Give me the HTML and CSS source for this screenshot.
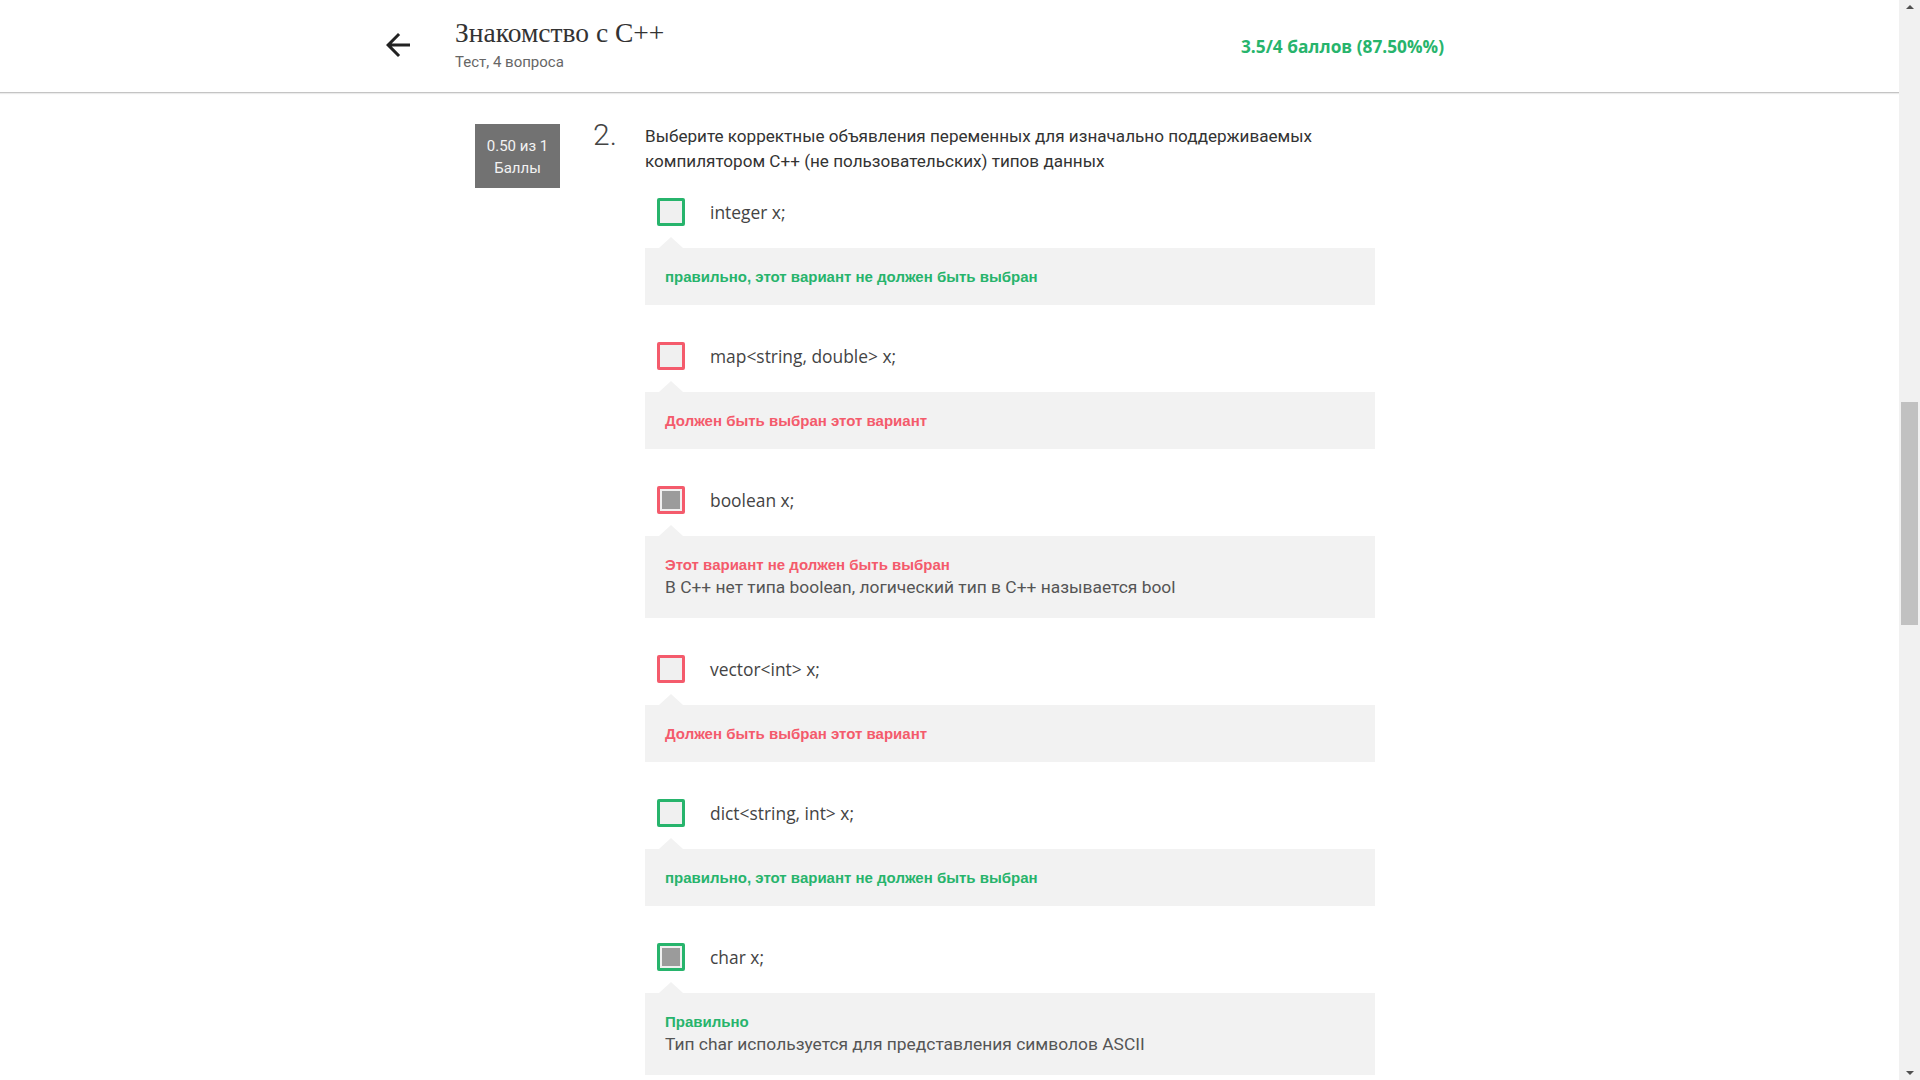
FILE: index.html
```html
<!DOCTYPE html>
<html lang="ru">
<head>
<meta charset="utf-8">
<title>Знакомство с C++</title>
<link rel="stylesheet" href="styles.css">
</head>
<body>
<div class="viewport">
  <div class="main">
    <header class="topbar">
      <div class="topbar-inner">
        <svg class="back" width="36" height="36" viewBox="0 0 24 24"><path d="M20 11H7.83l5.59-5.59L12 4l-8 8 8 8 1.41-1.41L7.83 13H20v-2z" fill="#222"/></svg>
        <div class="titles">
          <div class="title">Знакомство с C++</div>
          <div class="subtitle">Тест, 4 вопроса</div>
        </div>
        <div class="spacer"></div>
        <div class="score">3.5/4 баллов (87.50%%)</div>
      </div>
    </header>
    <section class="content">
      <div class="question">
        <div class="badge">0.50 из 1<br>Баллы</div>
        <div class="qnum">2.</div>
        <div class="qbody">
          <div class="qtext">Выберите корректные объявления переменных для изначально поддерживаемых компилятором C++ (не пользовательских) типов данных</div>
          <div class="options">
            <div class="option">
              <div class="row"><span class="cb ok"></span><span class="label">integer x;</span></div>
              <div class="fb"><div class="fb-title ok">правильно, этот вариант не должен быть выбран</div></div>
            </div>
            <div class="option">
              <div class="row"><span class="cb bad"></span><span class="label">map&lt;string, double&gt; x;</span></div>
              <div class="fb"><div class="fb-title bad">Должен быть выбран этот вариант</div></div>
            </div>
            <div class="option">
              <div class="row"><span class="cb bad checked"></span><span class="label">boolean x;</span></div>
              <div class="fb"><div class="fb-title bad">Этот вариант не должен быть выбран</div><div class="fb-text">В C++ нет типа boolean, логический тип в C++ называется bool</div></div>
            </div>
            <div class="option">
              <div class="row"><span class="cb bad"></span><span class="label">vector&lt;int&gt; x;</span></div>
              <div class="fb"><div class="fb-title bad">Должен быть выбран этот вариант</div></div>
            </div>
            <div class="option">
              <div class="row"><span class="cb ok"></span><span class="label">dict&lt;string, int&gt; x;</span></div>
              <div class="fb"><div class="fb-title ok">правильно, этот вариант не должен быть выбран</div></div>
            </div>
            <div class="option">
              <div class="row"><span class="cb ok checked"></span><span class="label">char x;</span></div>
              <div class="fb"><div class="fb-title ok">Правильно</div><div class="fb-text">Тип char используется для представления символов ASCII</div></div>
            </div>
          </div>
        </div>
      </div>
    </section>
  </div>
  <div class="scrollbar">
    <div class="arrow up"></div>
    <div class="track"><div class="thumb"></div></div>
    <div class="arrow down"></div>
  </div>
</div>
</body>
</html>
```

FILE: styles.css
```css
html, body {
  margin: 0;
  padding: 0;
  height: 100%;
  background: #fff;
}
body {
  font-family: Roboto, "Liberation Sans", sans-serif;
  color: #333;
  overflow: hidden;
}
.viewport {
  display: flex;
  height: 1080px;
  width: 1920px;
}
.main {
  flex: 1;
  overflow: hidden;
}
.topbar {
  height: 92px;
  border-bottom: 1px solid #c4c4c4;
  box-shadow: 0 1px 1px rgba(0, 0, 0, 0.08);
  display: flex;
  align-items: center;
}
.topbar-inner {
  margin-left: 380px;
  width: 1064px;
  display: flex;
  align-items: center;
}
.back {
  display: block;
  margin-top: -2px;
}
.titles {
  margin-left: 39px;
  margin-top: -3px;
}
.title {
  font-family: "Liberation Serif", "DejaVu Serif", serif;
  font-size: 27.5px;
  line-height: 30px;
  color: #333;
}
.subtitle {
  font-family: Roboto, "Liberation Sans", sans-serif;
  font-size: 15px;
  line-height: 18px;
  color: #666;
  margin-top: 5px;
}
.spacer { flex: 1; }
.score {
  font-family: "Open Sans", sans-serif;
  font-weight: 700;
  font-size: 17.3px;
  color: #27b46c;
  margin-top: 1px;
}
.content {
  padding-top: 31px;
  margin-left: 475px;
  width: 900px;
}
.question {
  display: flex;
  align-items: flex-start;
}
.badge {
  width: 85px;
  box-sizing: border-box;
  padding: 11px 0 9px;
  background: #727272;
  color: #f2f2f2;
  font-size: 15px;
  line-height: 22px;
  text-align: center;
}
.qnum {
  width: 52px;
  margin-left: 33px;
  margin-top: -4px;
  font-size: 30px;
  line-height: 30px;
  font-weight: 300;
  color: #444;
}
.qbody {
  width: 730px;
}
.qtext {
  font-size: 17.1px;
  line-height: 25px;
  color: #333;
}
.options {
  margin-top: 24px;
}
.option {
  margin-bottom: 37px;
}
.row {
  display: flex;
  align-items: center;
  padding-left: 12px;
  height: 28px;
}
.cb {
  width: 28px;
  height: 28px;
  box-sizing: border-box;
  border: 3px solid #27b46c;
  border-radius: 2px;
  background: #f0f0f0;
  position: relative;
  flex: none;
}
.cb.bad { border-color: #f45b6c; }
.cb.checked::after {
  content: "";
  position: absolute;
  inset: 2px;
  background: #9b9b9b;
}
.label {
  margin-left: 25px;
  margin-top: -1px;
  font-family: "Open Sans", sans-serif;
  font-size: 17.4px;
  color: #444;
}
.fb {
  position: relative;
  margin-top: 22px;
  background: #f2f2f2;
  padding: 18px 20px;
}
.fb::before {
  content: "";
  position: absolute;
  top: -11px;
  left: 14px;
  border-left: 12px solid transparent;
  border-right: 12px solid transparent;
  border-bottom: 11px solid #f2f2f2;
}
.fb-title {
  font-family: "Liberation Sans", Arial, sans-serif;
  font-weight: 700;
  font-size: 15px;
  line-height: 21px;
}
.fb-title.ok { color: #27b46c; }
.fb-title.bad { color: #f45b6c; }
.fb-text {
  font-size: 17.4px;
  line-height: 25px;
  color: #555;
}
.scrollbar {
  width: 21px;
  background: #f1f1f1;
  display: flex;
  flex-direction: column;
  align-items: center;
}
.arrow {
  width: 0;
  height: 0;
  border-left: 4px solid transparent;
  border-right: 4px solid transparent;
  margin: 5px 0;
}
.arrow.up { border-bottom: 4px solid #505050; }
.arrow.down { border-top: 4px solid #505050; }
.track {
  flex: 1;
  width: 100%;
  padding-top: 388px;
  box-sizing: border-box;
}
.thumb {
  width: 17px;
  height: 223px;
  margin: 0 auto;
  background: #c1c1c1;
}
```
